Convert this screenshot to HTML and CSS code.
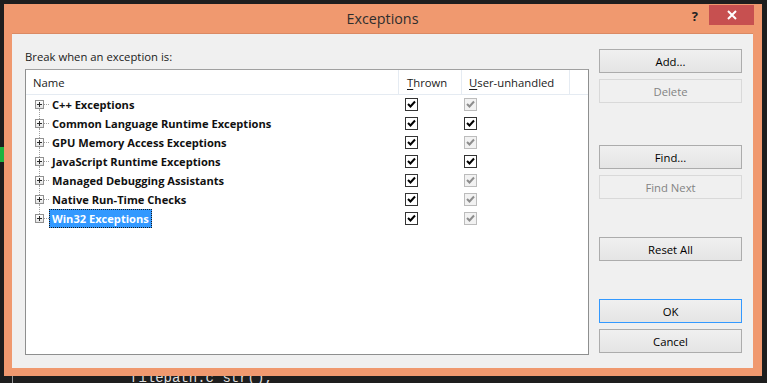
FILE: index.html
```html
<!DOCTYPE html>
<html lang="en">
<head>
  <meta charset="UTF-8" />
  <title>Exceptions</title>
  <link rel="stylesheet" href="styles.css">
</head>
<body>
  <div class="screen">
    <div class="gutter"><div class="marker"></div></div>
    <div class="window">
      <div class="titlebar">
        <span></span>
        <span class="title">Exceptions</span>
        <div class="controls">
          <span class="help">?</span>
          <span class="close">
            <svg width="10" height="10" viewBox="0 0 10 10"><path d="M1 1 L9 9 M9 1 L1 9" stroke="#fff" stroke-width="2"/></svg>
          </span>
        </div>
      </div>
      <div class="client">
        <div class="main">
          <div class="caption">Break when an exception is:</div>
          <div class="listbox">
            <div class="list-head">
              <div class="col col-name">Name</div>
              <div class="col col-thrown"><u>T</u>hrown</div>
              <div class="col col-user"><u>U</u>ser-unhandled</div>
            </div>
            <div id="rows">
              <!-- Rows inserted dynamically -->
            </div>
          </div>
        </div>
        <div class="buttons">
          <button class="btn">Add...</button>
          <button class="btn" disabled>Delete</button>
          <button class="btn btn-find">Find...</button>
          <button class="btn" disabled>Find Next</button>
          <button class="btn btn-reset">Reset All</button>
          <button class="btn btn-ok">OK</button>
          <button class="btn btn-cancel">Cancel</button>
        </div>
      </div>
    </div>
  </div>
  <div class="code"><span class="edge"></span><span class="src">filepath.c_str(),</span></div>

  <script>
    const data = [
      { name: "C++ Exceptions", thrown: true, user: "off" },
      { name: "Common Language Runtime Exceptions", thrown: true, user: "on" },
      { name: "GPU Memory Access Exceptions", thrown: true, user: "off" },
      { name: "JavaScript Runtime Exceptions", thrown: true, user: "on" },
      { name: "Managed Debugging Assistants", thrown: true, user: "off" },
      { name: "Native Run-Time Checks", thrown: true, user: "off" },
      { name: "Win32 Exceptions", thrown: true, user: "off", selected: true }
    ];

    const tick = '<svg width="11" height="11" viewBox="0 0 11 11"><path d="M2 5 L4.5 7.5 L9 2.5" fill="none" stroke="currentColor" stroke-width="2"/></svg>';

    function checkbox(state) {
      const cls = state === "off" ? "check disabled" : "check";
      return `<span class="${cls}">${tick}</span>`;
    }

    const rows = document.getElementById('rows');
    for (const row of data) {
      rows.innerHTML += `
        <div class="row">
          <div class="cell cell-name">
            <span class="node"><span class="expander"></span></span><span class="twig"></span>
            <span class="label${row.selected ? ' selected' : ''}">${row.name}</span>
          </div>
          <div class="cell cell-thrown">${checkbox(row.thrown ? "on" : "none")}</div>
          <div class="cell cell-user">${checkbox(row.user)}</div>
        </div>
      `;
    }
  </script>
</body>
</html>
```

FILE: styles.css
```css
body {
  margin: 0;
  padding-top: 4px;
  width: 767px;
  height: 379px;
  overflow: hidden;
  background-color: #1e1e1e;
  font-family: "Open Sans", "Noto Sans", sans-serif;
  font-size: 11.3px;
  color: #1a1a1a;
}
.screen {
  display: flex;
}
.gutter {
  width: 4px;
}
.marker {
  margin-top: 143px;
  height: 15px;
  background-color: #1db43f;
}
.window {
  width: 758px;
  height: 372px;
  box-sizing: border-box;
  padding: 0 9px 8px 8px;
  background-color: #f0996f;
  display: flex;
  flex-direction: column;
}
.titlebar {
  height: 30px;
  display: grid;
  grid-template-columns: 1fr auto 1fr;
}
.title {
  font-size: 14.3px;
  line-height: 30px;
  color: #2e2e2e;
}
.controls {
  display: flex;
  justify-content: flex-end;
  align-items: flex-start;
}
.help {
  font-weight: bold;
  font-size: 13px;
  line-height: 20px;
  margin-top: 2px;
  margin-right: 11px;
  color: #222;
}
.close {
  width: 45px;
  height: 20px;
  margin-top: 1px;
  margin-right: -1px;
  background-color: #c75050;
  display: flex;
  align-items: center;
  justify-content: center;
}
.close svg {
  display: block;
}
.client {
  flex: 1;
  background-color: #f0f0f0;
  display: flex;
  box-shadow: 0 -1px 0 #db8a64;
}
.main {
  padding-left: 13px;
}
.caption {
  padding-top: 15px;
  line-height: 16px;
  margin-bottom: 4px;
}
.listbox {
  width: 564px;
  height: 286px;
  box-sizing: border-box;
  border: 1px solid #8e8f8f;
  border-top-color: #a0a0a0;
  background: #ffffff;
}
.list-head {
  display: flex;
  height: 24px;
  border-bottom: 1px solid #e5ebf2;
}
.col {
  line-height: 25px;
  border-right: 1px solid #e5ebf2;
  box-sizing: border-box;
}
.col-name {
  width: 373px;
  padding-left: 7px;
}
.col-thrown {
  width: 63px;
  padding-left: 8px;
}
.col-user {
  width: 108px;
  padding-left: 7px;
}
.col u {
  text-decoration-thickness: 1px;
  text-underline-offset: 2px;
}
.row {
  display: flex;
  height: 19px;
}
.cell {
  display: flex;
  align-items: center;
}
.cell-name {
  width: 373px;
  padding-left: 9px;
  box-sizing: border-box;
}
.cell-thrown {
  width: 63px;
  padding-left: 6px;
  box-sizing: border-box;
}
.cell-user {
  width: 108px;
  padding-left: 2px;
  box-sizing: border-box;
}
.node {
  position: relative;
  display: flex;
}
.row + .row .node::before {
  content: "";
  position: absolute;
  left: 4px;
  bottom: 100%;
  height: 10px;
  border-left: 1px dotted #a0a0a0;
}
.expander {
  position: relative;
  width: 9px;
  height: 9px;
  box-sizing: border-box;
  border: 1px solid #919191;
  background: linear-gradient(#ffffff, #e4e4e4);
}
.expander::before,
.expander::after {
  content: "";
  position: absolute;
  background: #2a2a2a;
}
.expander::before {
  left: 1px;
  top: 3px;
  width: 5px;
  height: 1px;
}
.expander::after {
  left: 3px;
  top: 1px;
  width: 1px;
  height: 5px;
}
.twig {
  width: 5px;
  border-top: 1px dotted #a0a0a0;
}
.label {
  font-weight: bold;
  font-size: 11.1px;
  padding: 0 2px;
  line-height: 17px;
  border: 1px dotted transparent;
  color: #111;
}
.label.selected {
  background-color: #3399ff;
  color: #ffffff;
  border-color: #1a1a1a;
}
.check {
  width: 13px;
  height: 13px;
  box-sizing: border-box;
  border: 1px solid #333333;
  background: #ffffff;
  color: #000000;
  display: flex;
  align-items: center;
  justify-content: center;
}
.check svg {
  display: block;
}
.check.disabled {
  border-color: #bcbcbc;
  background: #f2f2f2;
  color: #8d8d8d;
}
.buttons {
  margin-left: 10px;
  padding-top: 15px;
  width: 143px;
  display: flex;
  flex-direction: column;
  gap: 6px;
}
.btn {
  height: 24px;
  width: 143px;
  border: 1px solid #acacac;
  background: linear-gradient(#f0f0f0, #e5e5e5);
  font-family: "Open Sans", "Noto Sans", sans-serif;
  font-size: 11.3px;
  color: #000;
  padding: 0;
}
.btn:disabled {
  border-color: #d9d9d9;
  background: #f0f0f0;
  color: #838383;
}
.btn-find {
  margin-top: 36px;
}
.btn-reset {
  margin-top: 32px;
}
.btn-ok {
  margin-top: 32px;
  border-color: #3399ff;
}
.btn-cancel {
  margin-top: 0;
}
.code {
  display: flex;
  height: 7px;
  overflow: hidden;
  font-family: "Liberation Mono", monospace;
  font-size: 14px;
  line-height: 14px;
  color: #dcdcdc;
}
.edge {
  width: 1px;
  margin-left: 12px;
  background: #9a9a9a;
}
.src {
  margin-left: 117px;
  margin-top: -5px;
}
```
